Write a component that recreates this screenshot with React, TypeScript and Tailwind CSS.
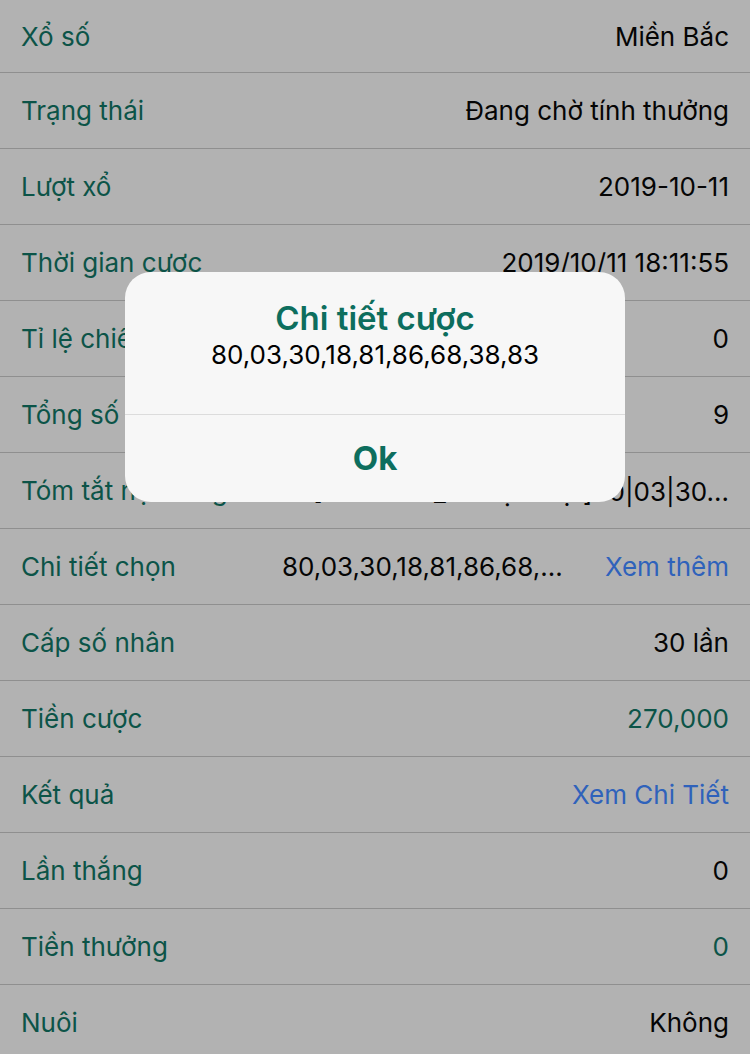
import React from 'react'

type Row = {
  label: string
  value: React.ReactNode
  tone?: 'black' | 'green' | 'blue'
}

const rows: Row[] = [
  { label: 'Xổ số', value: 'Miền Bắc' },
  { label: 'Trạng thái', value: 'Đang chờ tính thưởng' },
  { label: 'Lượt xổ', value: '2019-10-11' },
  { label: 'Thời gian cược', value: '2019/10/11 18:11:55' },
  { label: 'Tỉ lệ chiết khấu', value: '0' },
  { label: 'Tổng số cược', value: '9' },
  { label: 'Tóm tắt nội dung', value: '' },
  { label: 'Chi tiết chọn', value: '' },
  { label: 'Cấp số nhân', value: '30 lần' },
  { label: 'Tiền cược', value: '270,000', tone: 'green' },
  { label: 'Kết quả', value: 'Xem Chi Tiết', tone: 'blue' },
  { label: 'Lần thắng', value: '0' },
  { label: 'Tiền thưởng', value: '0', tone: 'green' },
  { label: 'Nuôi', value: 'Không' },
]

const toneClass = {
  black: 'text-[#050505]',
  green: 'text-[#0c5448]',
  blue: 'text-[#2f62bb]',
}

function DetailRow({ row, index }: { row: Row; index: number }) {
  const height = index === 0 ? 'h-[73px]' : 'h-[76px]'

  let right: React.ReactNode = (
    <span className={`whitespace-nowrap ${toneClass[row.tone ?? 'black']}`}>{row.value}</span>
  )

  if (row.label === 'Tóm tắt nội dung') {
    right = (
      <div className="flex w-[447px] justify-end overflow-hidden whitespace-nowrap pt-[2px] text-[#050505]">
        <span>[Lô xiên 2_Lô đặc biệt]80|03|30...</span>
      </div>
    )
  }

  if (row.label === 'Chi tiết chọn') {
    right = (
      <div className="flex w-[447px] items-center justify-between">
        <span className="text-[#050505]">80,03,30,18,81,86,68,...</span>
        <span className="text-[#2f62bb]">Xem thêm</span>
      </div>
    )
  }

  return (
    <div className={`flex ${height} shrink-0 items-center justify-between border-b border-[#8f8f8f] px-[21px]`}>
      <span className="whitespace-nowrap text-[#0c5448]">{row.label}</span>
      {right}
    </div>
  )
}

export default function App() {
  return (
    <div
      className="relative h-[1054px] w-[750px] overflow-hidden bg-[#b2b2b2] text-[26px]"
      style={{ fontFamily: 'Inter, "Noto Sans", sans-serif' }}
    >
      <div className="flex flex-col">
        {rows.map((row, i) => (
          <DetailRow key={row.label} row={row} index={i} />
        ))}
      </div>

      {/* alert popup */}
      <div className="absolute left-[125px] top-[272px] flex w-[500px] flex-col rounded-[26px] bg-[#f7f7f7]">
        <div className="flex h-[142px] flex-col items-center pt-[25px]">
          <div className="text-[33px] font-semibold leading-[42px] text-[#0d6e5e]">Chi tiết cược</div>
          <div className="text-[26px] leading-[32px] text-black">80,03,30,18,81,86,68,38,83</div>
        </div>
        <div className="h-px bg-[#dcdcdc]" />
        <div className="flex h-[87px] items-center justify-center text-[33px] font-bold text-[#0d6e5e]">Ok</div>
      </div>
    </div>
  )
}
